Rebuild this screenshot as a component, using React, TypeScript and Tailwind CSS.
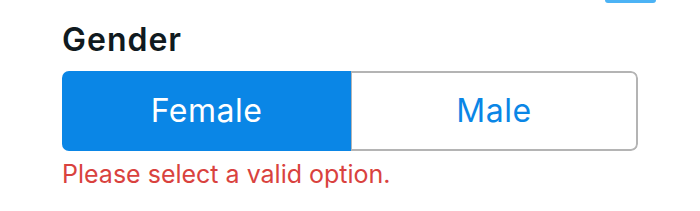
import React, { useState } from "react";

type Option = "female" | "male";

export default function App() {
    const [gender, setGender] = useState<Option>("female");

    const base = "flex items-center justify-center text-[32px] leading-none tracking-[0.5px]";

    return (
        <div className="w-[700px] h-[211px] bg-white font-['Inter',sans-serif] relative">
            <div className="absolute left-[605px] top-0 w-[51px] h-[3px] rounded-b-[3px] bg-[#4cb3f5]" />
            <div className="pl-[62px] pr-[62px] pt-[24px] flex flex-col">
                <label className="text-[32px] leading-[32px] font-semibold text-[#101a20] tracking-[1px]">Gender</label>
                <div className="mt-[15px] flex h-[80px] w-[576px] rounded-[7px] overflow-hidden">
                    <button
                        onClick={() => setGender("female")}
                        className={gender === "female"
                            ? base + " w-[289px] bg-[#0a86e6] text-white"
                            : base + " w-[289px] bg-white text-[#0a86e6] border-2 border-r-0 border-[#b4b4b4] rounded-l-[7px]"}
                    >
                        Female
                    </button>
                    <button
                        onClick={() => setGender("male")}
                        className={gender === "male"
                            ? base + " w-[287px] bg-[#0a86e6] text-white"
                            : base + " w-[287px] bg-white text-[#0a86e6] border-2 border-l border-[#b4b4b4] rounded-r-[7px]"}
                    >
                        Male
                    </button>
                </div>
                <p className="mt-[11px] text-[25px] leading-[25px] text-[#d9423e]">Please select a valid option.</p>
            </div>
        </div>
    );
}
